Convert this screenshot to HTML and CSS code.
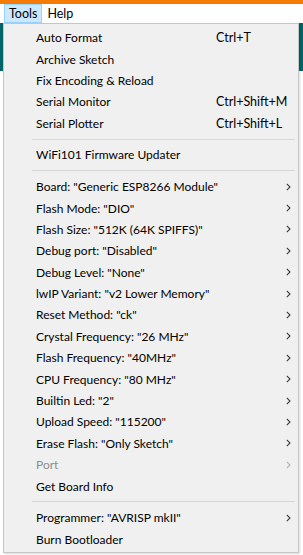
FILE: index.html
```html
<!DOCTYPE html>
<html lang="en">
<head>
    <meta charset="UTF-8">
    <meta name="viewport" content="width=device-width, initial-scale=1.0">
    <title>Tools menu</title>
    <link rel="stylesheet" href="styles.css">
</head>
<body>
    <!-- Window title strip -->
    <div class="title-strip"></div>

    <!-- Menu bar -->
    <div class="menubar">
        <span class="menubar-item active">Tools</span>
        <span class="menubar-item">Help</span>
    </div>

    <!-- Editor area behind the open menu -->
    <div class="workspace">
        <div class="toolbar-band"></div>
        <div class="editor-area"></div>

        <!-- Tools dropdown -->
        <div class="menu">
            <div class="item"><span class="label">Auto Format</span><span class="shortcut">Ctrl+T</span></div>
            <div class="item"><span class="label">Archive Sketch</span></div>
            <div class="item"><span class="label">Fix Encoding &amp; Reload</span></div>
            <div class="item"><span class="label">Serial Monitor</span><span class="shortcut">Ctrl+Shift+M</span></div>
            <div class="item"><span class="label">Serial Plotter</span><span class="shortcut">Ctrl+Shift+L</span></div>
            <div class="separator"></div>
            <div class="item"><span class="label">WiFi101 Firmware Updater</span></div>
            <div class="separator"></div>
            <div class="item sub"><span class="label">Board: "Generic ESP8266 Module"</span></div>
            <div class="item sub"><span class="label">Flash Mode: "DIO"</span></div>
            <div class="item sub"><span class="label">Flash Size: "512K (64K SPIFFS)"</span></div>
            <div class="item sub"><span class="label">Debug port: "Disabled"</span></div>
            <div class="item sub"><span class="label">Debug Level: "None"</span></div>
            <div class="item sub"><span class="label">lwIP Variant: "v2 Lower Memory"</span></div>
            <div class="item sub"><span class="label">Reset Method: "ck"</span></div>
            <div class="item sub"><span class="label">Crystal Frequency: "26 MHz"</span></div>
            <div class="item sub"><span class="label">Flash Frequency: "40MHz"</span></div>
            <div class="item sub"><span class="label">CPU Frequency: "80 MHz"</span></div>
            <div class="item sub"><span class="label">Builtin Led: "2"</span></div>
            <div class="item sub"><span class="label">Upload Speed: "115200"</span></div>
            <div class="item sub"><span class="label">Erase Flash: "Only Sketch"</span></div>
            <div class="item sub disabled"><span class="label">Port</span></div>
            <div class="item"><span class="label">Get Board Info</span></div>
            <div class="separator"></div>
            <div class="item sub"><span class="label">Programmer: "AVRISP mkII"</span></div>
            <div class="item"><span class="label">Burn Bootloader</span></div>
        </div>
    </div>

    <script>
        // add the submenu chevron to every item that opens a submenu
        var chevron = '<svg class="chevron" width="5" height="8" viewBox="0 0 5 8"><path d="M0.8 0.8 L4 4 L0.8 7.2" fill="none" stroke="currentColor" stroke-width="1.1"/></svg>';
        document.querySelectorAll('.item.sub').forEach(function(item) {
            var arrow = document.createElement('span');
            arrow.className = 'arrow';
            arrow.innerHTML = chevron;
            item.appendChild(arrow);
        });
    </script>
</body>
</html>
```

FILE: styles.css
```css
body {
    margin: 0;
    padding: 0;
    font-family: 'Lato', 'Open Sans', sans-serif;
    font-size: 12px;
    color: #000;
    background: #fff;
    overflow: hidden;
}

/* Orange strip at the very top */
.title-strip {
    height: 4px;
    background: #f57b05;
}

/* Menu bar */
.menubar {
    height: 19px;
    display: flex;
    align-items: stretch;
    padding-left: 4px;
    background: #fff;
}

.menubar-item {
    display: flex;
    align-items: center;
    padding: 0 4px;
    border: 1px solid transparent;
    box-sizing: border-box;
    font-size: 12.5px;
}

.menubar-item.active {
    background: #cce8ff;
    border-color: #99d1ff;
}

/* Editor behind the menu */
.workspace {
    position: relative;
    height: 532px;
}

.toolbar-band {
    height: 48px;
    background: #006468;
}

.editor-area {
    height: 484px;
    background: #fff;
}

/* Dropdown */
.menu {
    position: absolute;
    left: 3px;
    top: 0;
    width: 296px;
    box-sizing: border-box;
    background: #f0f0f0;
    border: 1px solid #c6c6c6;
    padding: 3px 0 2px;
    box-shadow: 1px 1px 2px rgba(0, 0, 0, 0.15);
}

.item {
    height: 21.4px;
    display: grid;
    grid-template-columns: minmax(0, 1fr) 70px 12px;
    align-items: center;
    padding-left: 32px;
    white-space: nowrap;
}

.label {
    grid-column: 1;
}

.shortcut {
    grid-column: 2;
    font-size: 12.5px;
}

.arrow {
    grid-column: 3;
    display: flex;
    align-items: center;
    color: #3c3c3c;
}

.item.disabled {
    color: #8d8d8d;
}

.item.disabled .arrow {
    color: #b4b4b4;
}

.separator {
    height: 10.3px;
    display: flex;
    align-items: center;
    margin: 0 3px 0 28px;
}

.separator::before {
    content: "";
    flex: 1;
    border-top: 1px solid #d7d7d7;
}
```
